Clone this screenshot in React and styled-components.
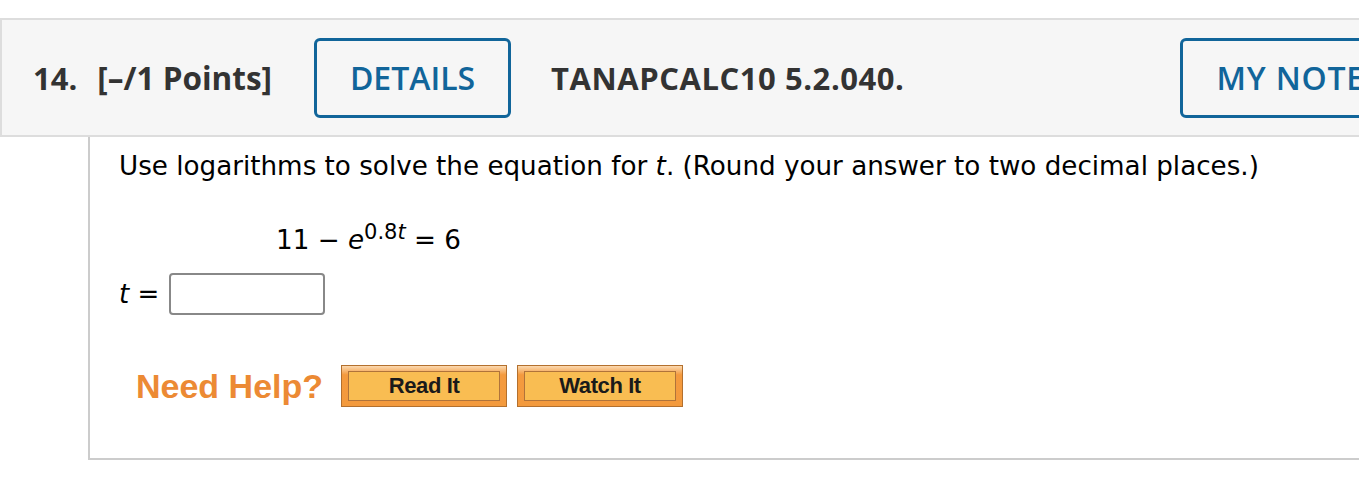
import React from 'react';
import styled, { createGlobalStyle } from 'styled-components';

const GlobalStyle = createGlobalStyle`
  html, body {
    margin: 0;
    padding: 0;
    background: #fff;
    overflow: hidden;
  }
`;

const Page = styled.div`
  width: 1359px;
  height: 495px;
  padding-top: 18px;
  box-sizing: border-box;
  overflow: hidden;
`;

const Header = styled.div`
  display: flex;
  align-items: center;
  height: 119px;
  width: 1500px;
  box-sizing: border-box;
  background: #f6f6f6;
  border: 2px solid #dddddd;
  padding-left: 31px;
  font-family: 'Open Sans', sans-serif;
  color: #333;
`;

const Number = styled.span`
  font-size: 31px;
  font-weight: 700;
  margin-right: 20px;
`;

const Points = styled.span`
  font-size: 31.5px;
  font-weight: 700;
  margin-right: 42px;
`;

const OutlineButton = styled.button`
  flex: none;
  height: 80px;
  width: ${(p) => p.$width}px;
  box-sizing: border-box;
  border: 3px solid #11659a;
  border-radius: 6px;
  background: transparent;
  color: #11659a;
  font-family: 'Open Sans', sans-serif;
  font-size: 32px;
  font-weight: 600;
  text-transform: uppercase;
  padding: 0 0 0 ${(p) => p.$padLeft || 0}px;
  text-align: ${(p) => p.$align || 'center'};
  white-space: nowrap;
  letter-spacing: ${(p) => p.$spacing || 0}px;
`;

const Code = styled.span`
  font-size: 31px;
  font-weight: 700;
  letter-spacing: 0.55px;
  margin-left: 40px;
  margin-right: 275px;
  white-space: nowrap;
`;

const Body = styled.div`
  margin-left: 88px;
  width: 1300px;
  height: 323px;
  box-sizing: border-box;
  border-left: 2px solid #cccccc;
  border-bottom: 2px solid #cccccc;
  padding: 13px 0 0 29px;
  font-family: 'DejaVu Sans', Verdana, sans-serif;
  color: #000;
`;

const Prompt = styled.p`
  margin: 0;
  font-size: 26.2px;
  line-height: 32px;
`;

const Var = styled.i`
  font-style: italic;
`;

const Equation = styled.div`
  margin: 42px 0 0 157px;
  font-size: 26.2px;
  line-height: 32px;
`;

const Sup = styled.sup`
  font-size: 21px;
  vertical-align: 10px;
  line-height: 0;
`;

const AnswerRow = styled.div`
  display: flex;
  align-items: center;
  gap: 10px;
  margin-top: 17px;
  font-size: 26px;
`;

const AnswerInput = styled.input`
  width: 156px;
  height: 42px;
  box-sizing: border-box;
  border: 2px solid #888;
  border-radius: 4px;
  background: #fff;
`;

const HelpRow = styled.div`
  display: flex;
  align-items: center;
  gap: 10px;
  margin: 50px 0 0 17px;
`;

const HelpLabel = styled.span`
  font-family: 'Liberation Sans', Arial, sans-serif;
  font-size: 34px;
  font-weight: 700;
  color: #ec8a34;
  margin-right: 8px;
`;

const HelpButton = styled.button`
  width: 166px;
  height: 42px;
  box-sizing: border-box;
  border: 1px solid #b3702e;
  background: linear-gradient(#fbd9b0 0%, #f49a3e 22%, #f39a3d 100%);
  padding: 5px 6px 5px;
  display: flex;
  cursor: pointer;
`;

const HelpButtonFace = styled.span`
  flex: 1;
  display: flex;
  align-items: center;
  justify-content: center;
  border: 1px solid #b0733a;
  background: #f9bd52;
  font-family: 'Liberation Sans', Arial, sans-serif;
  font-size: 22px;
  font-weight: 700;
  color: #1a1a1a;
  letter-spacing: -0.4px;
`;

export default function App() {
  return (
    <Page>
      <GlobalStyle />
      <Header>
        <Number>14.</Number>
        <Points>[–/1 Points]</Points>
        <OutlineButton $width={197}>Details</OutlineButton>
        <Code>TANAPCALC10 5.2.040.</Code>
        <OutlineButton $width={240} $align="left" $padLeft={34} $spacing={0.8}>
          My Notes
        </OutlineButton>
      </Header>
      <Body>
        <Prompt>
          Use logarithms to solve the equation for <Var>t</Var>. (Round your answer to two decimal places.)
        </Prompt>
        <Equation>
          11 − <Var>e</Var>
          <Sup>
            0.8<Var>t</Var>
          </Sup>{' '}
          = 6
        </Equation>
        <AnswerRow>
          <span>
            <Var>t</Var> =
          </span>
          <AnswerInput type="text" />
        </AnswerRow>
        <HelpRow>
          <HelpLabel>Need Help?</HelpLabel>
          <HelpButton>
            <HelpButtonFace>Read It</HelpButtonFace>
          </HelpButton>
          <HelpButton>
            <HelpButtonFace>Watch It</HelpButtonFace>
          </HelpButton>
        </HelpRow>
      </Body>
    </Page>
  );
}
